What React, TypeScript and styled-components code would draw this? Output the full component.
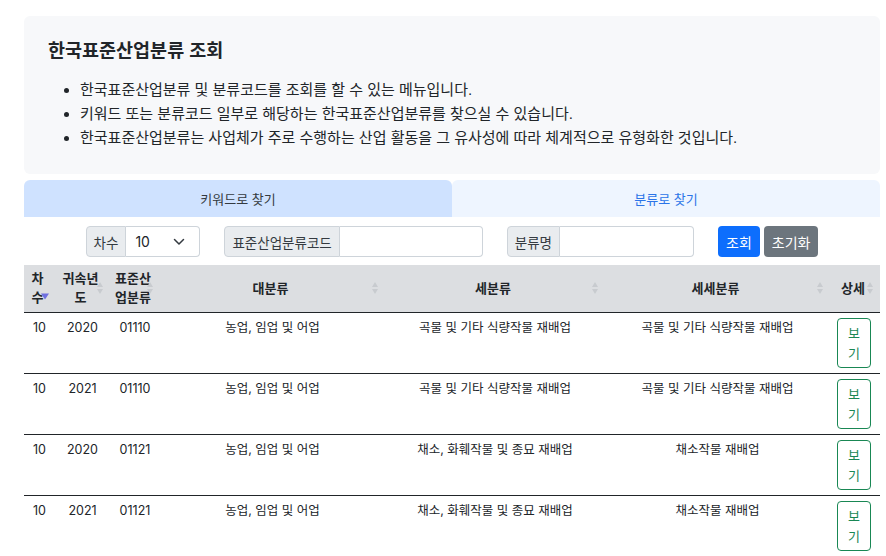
import React from 'react'
import styled, { createGlobalStyle } from 'styled-components'

const GlobalStyle = createGlobalStyle`
  body {
    margin: 0;
    background: #fff;
    color: #212529;
    font-family: "Liberation Sans", "Noto Sans CJK KR", sans-serif;
  }
`

const Page = styled.div`
  padding: 16px 6px 0 24px;
`

const InfoPanel = styled.section`
  background: #f7f8fa;
  border-radius: 6px;
  padding: 22px 24px 18px;
  height: 158px;
  box-sizing: border-box;
`

const Title = styled.h2`
  margin: 0 0 14px;
  font-size: 18.5px;
  font-weight: 700;
  line-height: 26px;
`

const InfoList = styled.ul`
  margin: 0;
  padding-left: 32px;
  font-size: 15px;
  line-height: 24px;
`

const Tabs = styled.div`
  display: grid;
  grid-template-columns: 1fr 1fr;
  margin-top: 6px;
`

const Tab = styled.button<{ $active?: boolean }>`
  height: 37px;
  border: 0;
  border-radius: 6px 6px 0 0;
  background: ${p => (p.$active ? '#cfe2ff' : '#eef5ff')};
  color: ${p => (p.$active ? '#343a40' : '#2b74e8')};
  font-family: inherit;
  font-size: 13px;
`

const SearchBar = styled.form`
  display: flex;
  justify-content: center;
  align-items: center;
  gap: 24px;
  padding: 9px 0 8px;
`

const InputGroup = styled.div`
  display: flex;
  height: 31px;
  font-size: 14px;
`

const Addon = styled.span`
  display: flex;
  align-items: center;
  padding: 0 7px;
  background: #e9ecef;
  border: 1px solid #ced4da;
  border-radius: 4px 0 0 4px;
  color: #343a40;
  font-size: 13.5px;
`

const Field = styled.input<{ $w: number }>`
  width: ${p => p.$w}px;
  box-sizing: border-box;
  border: 1px solid #ced4da;
  border-left: 0;
  border-radius: 0 4px 4px 0;
  padding: 0 8px;
  font-family: inherit;
  font-size: 14px;
`

const SelectBox = styled.div`
  display: flex;
  align-items: center;
  justify-content: space-between;
  width: 74px;
  box-sizing: border-box;
  border: 1px solid #ced4da;
  border-left: 0;
  border-radius: 0 4px 4px 0;
  padding: 0 14px 0 9px;
  font-family: Inter, sans-serif;
  font-size: 14px;
`

const Buttons = styled.div`
  display: flex;
  gap: 4px;
`

const Btn = styled.button<{ $tone: 'primary' | 'secondary' }>`
  height: 31px;
  padding: 0 8px;
  border: 0;
  border-radius: 4px;
  background: ${p => (p.$tone === 'primary' ? '#0d6efd' : '#6c757d')};
  color: #fff;
  font-family: inherit;
  font-size: 14px;
`

const Table = styled.table`
  width: 100%;
  border-collapse: collapse;
  table-layout: fixed;
  font-size: 13px;
`

const Th = styled.th<{ $w: number }>`
  width: ${p => p.$w}px;
  position: relative;
  background: #dcdee1;
  border-bottom: 1px solid #212529;
  padding: 4px 8px 4px 4px;
  height: 47px;
  box-sizing: border-box;
  font-weight: 700;
  line-height: 19px;
  text-align: center;
`

const SortMark = styled.svg`
  position: absolute;
  right: 6px;
  top: 50%;
  transform: translateY(-50%);
`

const ActiveMark = styled.svg`
  position: absolute;
  left: 17px;
  top: 28px;
`

const Td = styled.td`
  padding: 6px 4px;
  height: 61px;
  box-sizing: border-box;
  border-bottom: 1px solid #212529;
  vertical-align: top;
  text-align: center;
  font-family: Inter, "Noto Sans CJK KR", sans-serif;
  font-size: 12.5px;
  line-height: 17px;
`

const ViewBtn = styled.button`
  width: 34px;
  height: 50px;
  margin: -1px 0 -1px -2px;
  padding: 4px 8px;
  border: 1px solid #198754;
  border-radius: 4px;
  background: #fff;
  color: #198754;
  font-family: "Noto Sans CJK KR", sans-serif;
  font-size: 13px;
  line-height: 20px;
`

const Sort: React.FC<{ active?: boolean }> = ({ active }) =>
  active ? (
    <ActiveMark width="8" height="7" viewBox="0 0 8 7">
      <path d="M0 0.5 L8 0.5 L4 6.5 Z" fill="#6f6fe0" />
    </ActiveMark>
  ) : (
    <SortMark width="8" height="14" viewBox="0 0 8 14">
      <path d="M4 1 L7 6 L1 6 Z M4 13 L7 8 L1 8 Z" fill="#c8cbcf" />
    </SortMark>
  )

const columns = [
  { label: '차수', w: 31 },
  { label: '귀속년도', w: 55 },
  { label: '표준산업분류', w: 50 },
  { label: '대분류', w: 225 },
  { label: '세분류', w: 220 },
  { label: '세세분류', w: 225 },
  { label: '상세', w: 50 },
]

const rows = [
  { no: '10', year: '2020', code: '01110', big: '농업, 임업 및 어업', mid: '곡물 및 기타 식량작물 재배업', small: '곡물 및 기타 식량작물 재배업' },
  { no: '10', year: '2021', code: '01110', big: '농업, 임업 및 어업', mid: '곡물 및 기타 식량작물 재배업', small: '곡물 및 기타 식량작물 재배업' },
  { no: '10', year: '2020', code: '01121', big: '농업, 임업 및 어업', mid: '채소, 화훼작물 및 종묘 재배업', small: '채소작물 재배업' },
  { no: '10', year: '2021', code: '01121', big: '농업, 임업 및 어업', mid: '채소, 화훼작물 및 종묘 재배업', small: '채소작물 재배업' },
]

const App: React.FC = () => {
  return (
    <Page>
      <GlobalStyle />
      <InfoPanel>
        <Title>한국표준산업분류 조회</Title>
        <InfoList>
          <li>한국표준산업분류 및 분류코드를 조회를 할 수 있는 메뉴입니다.</li>
          <li>키워드 또는 분류코드 일부로 해당하는 한국표준산업분류를 찾으실 수 있습니다.</li>
          <li>한국표준산업분류는 사업체가 주로 수행하는 산업 활동을 그 유사성에 따라 체계적으로 유형화한 것입니다.</li>
        </InfoList>
      </InfoPanel>

      <Tabs>
        <Tab $active>키워드로 찾기</Tab>
        <Tab>분류로 찾기</Tab>
      </Tabs>

      <SearchBar onSubmit={e => e.preventDefault()}>
        <InputGroup>
          <Addon>차수</Addon>
          <SelectBox>
            10
            <svg width="12" height="8" viewBox="0 0 12 8">
              <path d="M1.5 1.5 L6 6 L10.5 1.5" fill="none" stroke="#343a40" strokeWidth="1.5" strokeLinecap="round" strokeLinejoin="round" />
            </svg>
          </SelectBox>
        </InputGroup>
        <InputGroup>
          <Addon>표준산업분류코드</Addon>
          <Field $w={143} />
        </InputGroup>
        <InputGroup>
          <Addon>분류명</Addon>
          <Field $w={134} />
        </InputGroup>
        <Buttons>
          <Btn $tone="primary">조회</Btn>
          <Btn $tone="secondary">초기화</Btn>
        </Buttons>
      </SearchBar>

      <Table>
        <thead>
          <tr>
            {columns.map((c, i) => (
              <Th key={c.label} $w={c.w}>
                {c.label}
                <Sort active={i === 0} />
              </Th>
            ))}
          </tr>
        </thead>
        <tbody>
          {rows.map((r, i) => (
            <tr key={i}>
              <Td>{r.no}</Td>
              <Td>{r.year}</Td>
              <Td>{r.code}</Td>
              <Td>{r.big}</Td>
              <Td>{r.mid}</Td>
              <Td>{r.small}</Td>
              <Td>
                <ViewBtn>보기</ViewBtn>
              </Td>
            </tr>
          ))}
        </tbody>
      </Table>
    </Page>
  )
}

export default App
